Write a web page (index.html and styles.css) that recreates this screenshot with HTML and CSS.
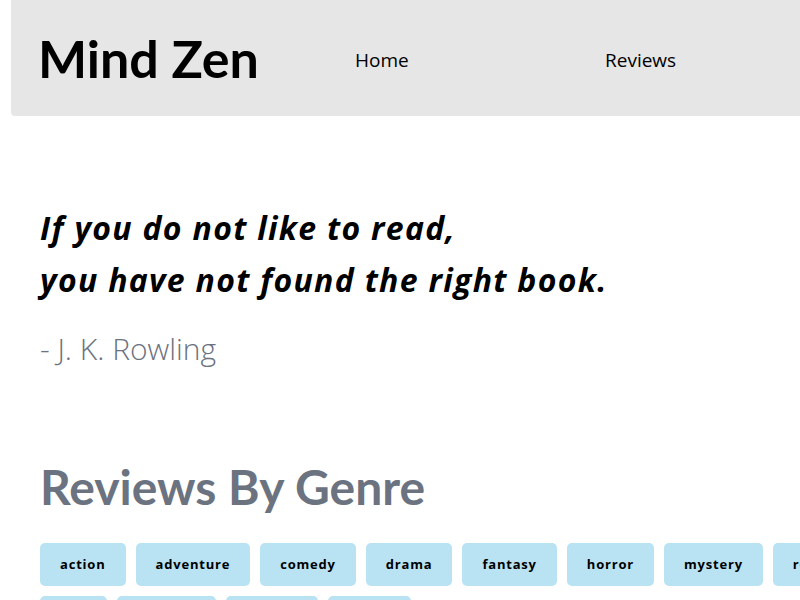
FILE: index.html
```html
<!DOCTYPE html>
<html lang="en">
<head>
    <meta charset="UTF-8">
    <meta name="viewport" content="width=device-width, initial-scale=1.0">
    <title>Mind Zen</title>
    <link rel="stylesheet" href="styles.css">
</head>
<body>
    <div class="page">
        <header class="header">
            <div class="logo">Mind Zen</div>
            <nav class="nav">
                <a href="#">Home</a>
                <a href="#">Reviews</a>
            </nav>
        </header>

        <section class="quote">
            <p class="quote-text">If you do not like to read,<br>you have not found the right book.</p>
            <p class="quote-author">- J. K. Rowling</p>
        </section>

        <section class="genres">
            <h2>Reviews By Genre</h2>
            <div class="tags">
                <a class="tag" href="#">action</a>
                <a class="tag" href="#">adventure</a>
                <a class="tag" href="#">comedy</a>
                <a class="tag" href="#">drama</a>
                <a class="tag" href="#">fantasy</a>
                <a class="tag" href="#">horror</a>
                <a class="tag" href="#">mystery</a>
                <a class="tag" href="#">romance</a>
                <a class="tag" href="#">war</a>
                <a class="tag" href="#">western</a>
                <a class="tag" href="#">thriller</a>
                <a class="tag" href="#">travel</a>
            </div>
        </section>
    </div>
</body>
</html>
```

FILE: styles.css
```css
html, body {
    margin: 0;
    overflow: hidden;
}
body {
    font-family: "Open Sans", "Noto Sans", sans-serif;
    color: #000;
    background: #fff;
}
.page {
    width: 800px;
    height: 600px;
    overflow: hidden;
}
.header {
    display: flex;
    align-items: center;
    height: 116px;
    margin-left: 11px;
    padding-left: 27px;
    background-color: #e6e6e6;
    border-bottom-left-radius: 4px;
}
.logo {
    flex-shrink: 0;
    width: 317px;
    font-family: Lato, "Open Sans", sans-serif;
    font-size: 52px;
    font-weight: 700;
    line-height: 60px;
    white-space: nowrap;
}
.nav {
    display: flex;
    padding-top: 3px;
    white-space: nowrap;
}
.nav a {
    width: 250px;
    font-size: 19px;
    color: #000;
    text-decoration: none;
}
.quote {
    padding-left: 40px;
}
.quote-text {
    margin: 86px 0 0;
    font-size: 32px;
    font-weight: 700;
    font-style: italic;
    line-height: 52px;
    letter-spacing: 1.3px;
}
.quote-author {
    margin: 23px 0 0;
    font-size: 30px;
    font-weight: 300;
    line-height: 40px;
    color: #6b7280;
}
.genres {
    padding-left: 40px;
}
.genres h2 {
    margin: 88px 0 0;
    font-family: Lato, "Open Sans", sans-serif;
    font-size: 48px;
    font-weight: 700;
    line-height: 60px;
    color: #6b7280;
}
.tags {
    display: flex;
    flex-wrap: wrap;
    gap: 10px;
    width: 860px;
    margin-top: 26px;
}
.tag {
    padding: 13px 20px;
    font-size: 13px;
    font-weight: 700;
    line-height: 17px;
    letter-spacing: 0.8px;
    color: #000;
    text-decoration: none;
    background-color: #b9e2f3;
    border-radius: 5px;
}
```
